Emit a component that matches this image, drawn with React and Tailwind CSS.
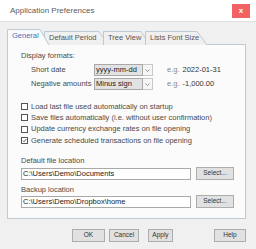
import React from "react";

function Tab({ label, width, selected, last }) {
  const h = selected ? 15 : 13;
  return (
    <div
      className={`relative shrink-0 ${selected ? "z-20 h-[16px] mt-0" : "z-10 h-[13px] mt-[2px]"}`}
      style={{ width }}
    >
      <svg
        className="absolute left-0 top-0 overflow-visible"
        width={width}
        height={h}
      >
        <path
          d={`M0.5 ${h + 1} L0.5 0.5 L${width - 4} 0.5 L${width + (last ? 6 : 5)} ${h + 1}`}
          fill={selected ? "#fbfbfb" : "#f0f0f0"}
          stroke="#bccad8"
          strokeWidth="1"
        />
      </svg>
      <span
        className={`relative block pl-[5px] pt-[2px] text-[7.5px] leading-[10px] whitespace-nowrap ${
          selected ? "text-[#3b72c2]" : "text-[#555]"
        }`}
      >
        {label}
      </span>
    </div>
  );
}

function SelectBox({ value }) {
  return (
    <div className="flex h-[12px] w-[59px]">
      <div className="flex flex-1 items-center border border-[#a9a9a9] bg-[#e2e2e2] pl-[1px] text-[7.5px] leading-none text-[#222]">
        {value}
      </div>
      <div className="flex w-[10px] items-center justify-center border border-l-0 border-[#c8c8c8] bg-[#f6f6f6]">
        <svg width="5" height="3" viewBox="0 0 5 3">
          <path d="M0.5 0.5 L2.5 2.5 L4.5 0.5" fill="none" stroke="#777" strokeWidth="0.8" />
        </svg>
      </div>
    </div>
  );
}

function Check({ label, checked }) {
  return (
    <div className="flex h-[11.3px] items-center">
      <div className="relative mr-[3px] h-[7px] w-[7px] border border-[#555] bg-white">
        {checked && (
          <svg className="absolute left-0 top-0" width="5" height="5" viewBox="0 0 5 5">
            <path d="M0.8 2.6 L2 3.8 L4.3 1" fill="none" stroke="#333" strokeWidth="0.8" />
          </svg>
        )}
      </div>
      <span className="text-[7.5px] leading-none text-[#4a4a4a] whitespace-nowrap">{label}</span>
    </div>
  );
}

function Btn({ label, className }) {
  return (
    <div
      className={`flex h-[13px] items-center justify-center border border-[#adadad] bg-[#e1e1e1] text-[6.5px] leading-none text-[#333] ${className}`}
    >
      {label}
    </div>
  );
}

export default function App() {
  return (
    <div className="flex h-[249px] w-[256px] flex-col overflow-hidden bg-[#f0f0f0] font-['Liberation_Sans',Arial,sans-serif]">
      <div className="flex h-[22px] shrink-0 items-center justify-between border-b border-[#dedede] bg-white pl-[10px] pr-[6px]">
        <span className="text-[8px] leading-none text-[#5c5c5c]">Application Preferences</span>
        <div className="flex h-[14px] w-[18px] items-center justify-center bg-[#f26262] text-[8px] font-bold leading-none text-white">
          x
        </div>
      </div>

      <div className="ml-[7px] mt-[7px] flex w-[239px] flex-col">
        <div className="relative flex h-[15px] items-start">
          <Tab label="General" width={37} selected />
          <Tab label="Default Period" width={59} />
          <Tab label="Tree View" width={42} />
          <Tab label="Lists Font Size" width={56} last />
        </div>
        <div className="flex h-[175px] flex-col border border-[#bccad8] bg-[#fbfbfb] pl-[13px] pt-[5px]">
          <div className="h-[11px] text-[7.5px] leading-[11px] text-[#4a4a4a]">Display formats:</div>
          <div className="mt-[3px] flex flex-col gap-[2px] pl-[10px]">
            <div className="flex h-[12px] items-center">
              <span className="w-[63px] text-[7.5px] leading-none text-[#4a4a4a]">Short date</span>
              <SelectBox value="yyyy-mm-dd" />
              <span className="ml-[14px] text-[7.5px] leading-none text-[#888]">e.g.</span>
              <span className="ml-[3px] text-[7.5px] leading-none text-[#333]">2022-01-31</span>
            </div>
            <div className="flex h-[12px] items-center">
              <span className="w-[63px] text-[7.5px] leading-none text-[#4a4a4a] whitespace-nowrap">Negative amounts</span>
              <SelectBox value="Minus sign" />
              <span className="ml-[14px] text-[7.5px] leading-none text-[#888]">e.g.</span>
              <span className="ml-[3px] text-[7.5px] leading-none text-[#333]">-1,000.00</span>
            </div>
          </div>
          <div className="mt-[11px] flex flex-col">
            <Check label="Load last file used automatically on startup" />
            <Check label="Save files automatically (i.e. without user confirmation)" />
            <Check label="Update currency exchange rates on file opening" />
            <Check label="Generate scheduled transactions on file opening" checked />
          </div>
          <div className="mt-[9px] h-[11px] text-[7.5px] leading-[11px] text-[#4a4a4a]">Default file location</div>
          <div className="mt-[1px] flex items-center">
            <div className="flex h-[12px] w-[170px] items-center border border-[#a9a9a9] bg-white pl-[1px] text-[7.5px] leading-none text-[#222]">
              C:\Users\Demo\Documents
            </div>
            <Btn label="Select..." className="ml-[5px] h-[12px] w-[38px]" />
          </div>
          <div className="mt-[4px] h-[11px] text-[7.5px] leading-[11px] text-[#4a4a4a]">Backup location</div>
          <div className="flex items-center">
            <div className="flex h-[12px] w-[170px] items-center border border-[#a9a9a9] bg-white pl-[1px] text-[7.5px] leading-none text-[#222]">
              C:\Users\Demo\Dropbox\home
            </div>
            <Btn label="Select..." className="ml-[5px] h-[12px] w-[38px]" />
          </div>
        </div>
      </div>

      <div className="mt-[10px] flex">
        <Btn label="OK" className="ml-[72px] w-[33px]" />
        <Btn label="Cancel" className="ml-[4px] w-[30px]" />
        <Btn label="Apply" className="ml-[9px] w-[25px]" />
        <Btn label="Help" className="ml-[41px] w-[32px]" />
      </div>
    </div>
  );
}
